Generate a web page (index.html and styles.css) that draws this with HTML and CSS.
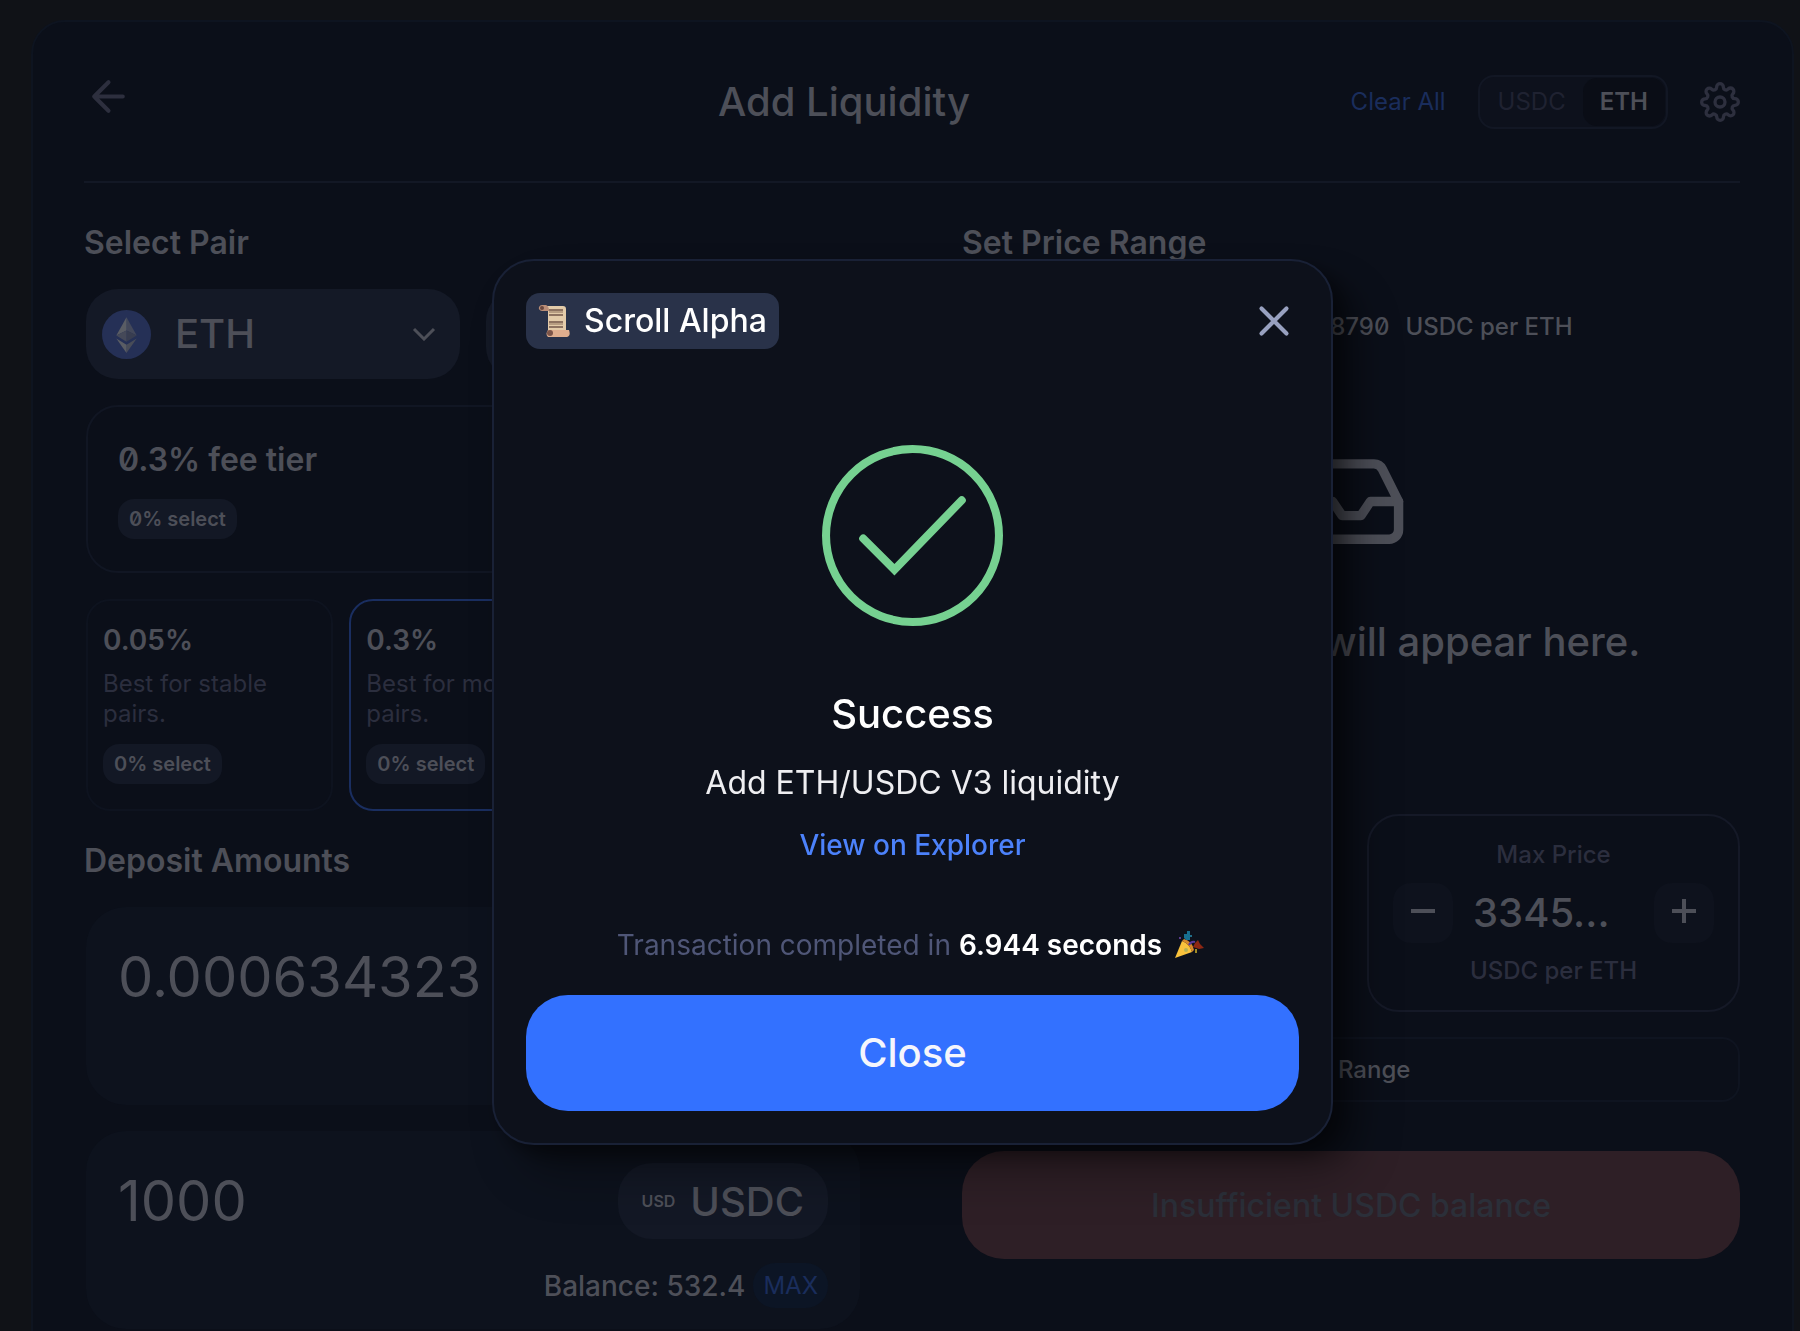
FILE: index.html
```html
<!DOCTYPE html>
<html lang="en">
<head>
  <meta charset="UTF-8">
  <meta name="viewport" content="width=device-width, initial-scale=1.0">
  <title>Add Liquidity</title>
  <link rel="stylesheet" href="styles.css">
</head>
<body>
  <main class="card">
    <header class="card-header">
      <a class="back" href="#" aria-label="Back">
        <svg class="back-icon" viewBox="0 0 24 24"><path d="M19 12H5M12 19l-7-7 7-7"/></svg>
      </a>
      <h1 class="title">Add Liquidity</h1>
      <div class="header-actions">
        <button class="clear-btn" type="button">Clear All</button>
        <div class="toggle">
          <button class="toggle-btn" type="button">USDC</button>
          <button class="toggle-btn active" type="button">ETH</button>
        </div>
        <button class="settings-btn" type="button" aria-label="Settings">
          <svg class="settings-icon" viewBox="0 0 24 24"><circle cx="12" cy="12" r="3"/><path d="M19.4 15a1.65 1.65 0 0 0 .33 1.82l.06.06a2 2 0 0 1 0 2.83 2 2 0 0 1-2.83 0l-.06-.06a1.65 1.65 0 0 0-1.82-.33 1.65 1.65 0 0 0-1 1.51V21a2 2 0 0 1-2 2 2 2 0 0 1-2-2v-.09A1.65 1.65 0 0 0 9 19.4a1.65 1.65 0 0 0-1.82.33l-.06.06a2 2 0 0 1-2.83 0 2 2 0 0 1 0-2.83l.06-.06a1.65 1.65 0 0 0 .33-1.82 1.65 1.65 0 0 0-1.51-1H3a2 2 0 0 1-2-2 2 2 0 0 1 2-2h.09A1.65 1.65 0 0 0 4.6 9a1.65 1.65 0 0 0-.33-1.82l-.06-.06a2 2 0 0 1 0-2.83 2 2 0 0 1 2.83 0l.06.06a1.65 1.65 0 0 0 1.82.33H9a1.65 1.65 0 0 0 1-1.51V3a2 2 0 0 1 2-2 2 2 0 0 1 2 2v.09a1.65 1.65 0 0 0 1 1.51 1.65 1.65 0 0 0 1.82-.33l.06-.06a2 2 0 0 1 2.83 0 2 2 0 0 1 0 2.83l-.06.06a1.65 1.65 0 0 0-.33 1.82V9a1.65 1.65 0 0 0 1.51 1H21a2 2 0 0 1 2 2 2 2 0 0 1-2 2h-.09a1.65 1.65 0 0 0-1.51 1z"/></svg>
        </button>
      </div>
    </header>

    <div class="columns">
      <!-- Pair, fee tier and deposit -->
      <section class="column left">
        <h2 class="heading">Select Pair</h2>
        <div class="pair">
          <button class="token-select" type="button">
            <svg class="token-icon" viewBox="0 0 48 48">
              <circle cx="24" cy="24" r="24" fill="#253056"/>
              <path d="M24 7v13L34 25z" fill="#43485a"/>
              <path d="M24 7L14 25l10-5z" fill="#5a5d64"/>
              <path d="M24 20v11l10-6z" fill="#383d50"/>
              <path d="M24 20L14 25l10 6z" fill="#454958"/>
              <path d="M24 34v8l10-14z" fill="#484c58"/>
              <path d="M24 34L14 28l10 14z" fill="#5a5d64"/>
            </svg>
            <span class="token-name">ETH</span>
            <svg class="chevron" viewBox="0 0 24 14"><path d="M2 2l10 10L22 2"/></svg>
          </button>
          <button class="token-select" type="button" aria-label="Second token"></button>
        </div>

        <div class="fee-card">
          <div class="fee-title">0.3% fee tier</div>
          <span class="badge slashed">0% select</span>
        </div>

        <div class="fee-options">
          <button class="fee-option" type="button">
            <span class="fee-value">0.05%</span>
            <span class="fee-text">Best for stable pairs.</span>
            <span class="badge">0% select</span>
          </button>
          <button class="fee-option selected" type="button">
            <span class="fee-value">0.3%</span>
            <span class="fee-text">Best for most pairs.</span>
            <span class="badge">0% select</span>
          </button>
        </div>

        <h2 class="heading deposit-heading">Deposit Amounts</h2>
        <div class="deposit">
          <div class="deposit-row">
            <input class="amount" type="text" value="0.000634323" aria-label="ETH amount">
          </div>
        </div>
        <div class="deposit">
          <div class="deposit-row">
            <input class="amount" type="text" value="1000" aria-label="USDC amount">
            <button class="currency" type="button"><span class="currency-logo">USD</span>USDC</button>
          </div>
          <div class="balance-row">
            <span class="balance">Balance: 532.4</span>
            <button class="max-btn" type="button">MAX</button>
          </div>
        </div>
      </section>

      <!-- Price range -->
      <section class="column right">
        <h2 class="heading">Set Price Range</h2>
        <p class="current-price">
          <span class="slashed">Current Price: 78.8790</span>
          <span>USDC per ETH</span>
        </p>
        <div class="chart-empty">
          <svg class="inbox-icon" viewBox="0 0 24 24"><path d="M22 12h-6l-2 3h-4l-2-3H2"/><path d="M5.45 5.11L2 12v6a2 2 0 0 0 2 2h16a2 2 0 0 0 2-2v-6l-3.45-6.89A2 2 0 0 0 16.76 4H7.24a2 2 0 0 0-1.79 1.11z"/></svg>
          <p class="empty-text">Your position will appear here.</p>
        </div>
        <div class="range">
          <div class="price-box">
            <label class="price-label" for="maxPrice">Max Price</label>
            <div class="price-row">
              <button class="step-btn" type="button" aria-label="Decrease">
                <svg class="step-icon" viewBox="0 0 24 24"><path d="M0 12h24"/></svg>
              </button>
              <input class="price-input" id="maxPrice" type="text" value="3345...">
              <button class="step-btn" type="button" aria-label="Increase">
                <svg class="step-icon" viewBox="0 0 24 24"><path d="M0 12h24M12 0v24"/></svg>
              </button>
            </div>
            <div class="price-label">USDC per ETH</div>
          </div>
        </div>
        <button class="full-range" type="button">Full Range</button>
        <button class="error-btn" type="button" disabled>Insufficient USDC balance</button>
      </section>
    </div>
  </main>

  <div class="overlay">
    <div class="modal" role="dialog" aria-modal="true" aria-labelledby="modalTitle">
      <div class="modal-top">
        <div class="network">
          <svg class="scroll-icon" viewBox="0 0 32 32">
            <path d="M5 1h20q3 0 3 3v23H10V6H5z" fill="#e3cba9"/>
            <path d="M4 0h4q3 1 3 6H4Q0 5 1 2q1-2 3-2z" fill="#b98d77"/>
            <circle cx="4" cy="3" r="2" fill="#69473f"/>
            <path d="M11 5h14M11 10h14M11 17h14M11 22h14" stroke="#8e7361" stroke-width="2"/>
            <path d="M11 7h14M11 19h14" stroke="#b79d82" stroke-width="2"/>
            <path d="M10 25h21q2 6-2 7H10q-3-3 0-7z" fill="#dfae8e"/>
            <circle cx="12" cy="28" r="3" fill="#7d5549"/>
          </svg>
          Scroll Alpha
        </div>
        <button class="x-btn" type="button" aria-label="Close dialog">
          <svg class="x-icon" viewBox="0 0 24 24"><path d="M18 6L6 18M6 6l12 12"/></svg>
        </button>
      </div>
      <svg class="check-icon" viewBox="0 0 180 180">
        <circle cx="90" cy="90" r="86"/>
        <path d="M41 93l31 31 67-69"/>
      </svg>
      <h2 class="modal-title" id="modalTitle">Success</h2>
      <p class="modal-text">Add ETH/USDC V3 liquidity</p>
      <a class="explorer" href="#">View on Explorer</a>
      <p class="duration">
        Transaction completed in <strong>6.944 seconds</strong>
        <svg class="party-icon" viewBox="0 0 30 30">
          <path d="M1 28L8 11q8 3 10 11z" fill="#f9c23c"/>
          <path d="M8 11q8 3 10 11l2-2Q18 11 10 9z" fill="#d9892b"/>
          <path d="M10 8V4h3V1h3v9h-4z" fill="#176f91"/>
          <path d="M15 15q2-4 6-3" fill="none" stroke="#5a3a99" stroke-width="2"/>
          <path d="M19 17l2-4 3-3 2 4 4 4-5 1z" fill="#8d2713"/>
          <path d="M22 19v4" stroke="#a08b26" stroke-width="2"/>
          <circle cx="6" cy="8" r="1" fill="#7448b8"/>
          <circle cx="17" cy="6" r="1" fill="#288cae"/>
          <circle cx="12" cy="20" r="2" fill="#b5b154"/>
        </svg>
      </p>
      <button class="close-btn" type="button">Close</button>
    </div>
  </div>
</body>
</html>
```
FILE: styles.css
```css
/* Global styles */
* {
  margin: 0;
  padding: 0;
  box-sizing: border-box;
}

body {
  height: 100vh;
  overflow: hidden;
  padding: 20px 6px 0 31px;
  background: #101217;
  color: #4d4f58;
  font-family: Inter, "Liberation Sans", sans-serif;
}

button, input {
  border: none;
  background: none;
  color: inherit;
  font-family: inherit;
}

button {
  cursor: pointer;
}

a {
  text-decoration: none;
}

svg {
  display: block;
  fill: none;
  flex-shrink: 0;
}

.card {
  background: #0b0f19;
  border: 2px solid #0e1420;
  border-radius: 34px;
  padding: 0 52px 60px 51px;
}

/* Header */
.card-header {
  display: grid;
  grid-template-columns: 1fr 4fr auto;
  align-items: center;
  height: 161px;
  border-bottom: 2px solid #131825;
}

.back {
  padding-bottom: 10px;
}

.back-icon {
  width: 49px;
  height: 49px;
  stroke: #2d2f3e;
  stroke-width: 2;
  stroke-linecap: round;
  stroke-linejoin: round;
}

.title {
  font-size: 40px;
  line-height: 48px;
  font-weight: 500;
  text-align: center;
}

.header-actions {
  display: flex;
  align-items: center;
  gap: 32px;
}

.clear-btn {
  color: #1a2d5c;
  font-size: 24px;
  line-height: 30px;
}

.toggle {
  display: flex;
  border: 2px solid #121724;
  border-radius: 16px;
  background: #0d111c;
  padding: 1px;
}

.toggle-btn {
  padding: 9px 17px;
  border-radius: 14px;
  color: #1f2231;
  font-size: 24px;
  line-height: 30px;
}

.toggle-btn.active {
  background: #0a0d16;
  color: #4d4f58;
  font-weight: 600;
}

.settings-icon {
  width: 40px;
  height: 40px;
  stroke: #2d2f3e;
  stroke-width: 2;
}

/* Columns */
.columns {
  display: grid;
  grid-template-columns: repeat(2, minmax(0, 1fr));
  gap: 100px;
  padding-top: 40px;
}

.column {
  display: flex;
  flex-direction: column;
}

.left {
  gap: 26px;
}

.heading {
  font-size: 32px;
  line-height: 40px;
  font-weight: 600;
}

.deposit-heading {
  margin-top: 4px;
}

.pair, .fee-card, .fee-options, .deposit {
  margin: 0 2px;
}

.pair {
  display: grid;
  grid-template-columns: repeat(2, minmax(0, 1fr));
  gap: 26px;
}

.token-select {
  display: flex;
  align-items: center;
  height: 90px;
  padding: 0 24px 0 16px;
  border-radius: 32px;
  background: #141926;
}

.token-icon {
  width: 49px;
  height: 49px;
}

.token-name {
  flex: 1;
  margin-left: 24px;
  font-size: 40px;
  line-height: 48px;
  font-weight: 500;
  text-align: left;
}

.chevron {
  width: 24px;
  height: 14px;
  stroke: #4d4f58;
  stroke-width: 3;
}

.fee-card {
  border: 2px solid #111623;
  border-radius: 32px;
  padding: 33px 30px 32px;
}

.fee-title {
  margin-bottom: 19px;
  font-size: 32px;
  line-height: 40px;
  font-weight: 600;
}

.fee-title, .slashed {
  font-variant-numeric: slashed-zero;
}

.badge {
  display: block;
  width: fit-content;
  padding: 6px 11px;
  border-radius: 16px;
  background: #131825;
  font-size: 20px;
  line-height: 28px;
  font-weight: 600;
}

.fee-options {
  display: grid;
  grid-template-columns: repeat(3, minmax(0, 1fr));
  gap: 16px;
}

.fee-option {
  display: flex;
  flex-direction: column;
  align-items: flex-start;
  padding: 22px 15px 25px;
  border: 2px solid #0e131f;
  border-radius: 24px;
  text-align: left;
}

.fee-option.selected {
  border-color: #1a2e60;
}

.fee-value {
  font-size: 28px;
  line-height: 34px;
  font-weight: 600;
}

.fee-text {
  margin: 12px 0 15px;
  color: #2b2e3e;
  font-size: 24px;
  line-height: 30px;
}

/* Deposit */
.deposit {
  min-height: 198px;
  padding: 32px 32px 21px;
  border-radius: 40px;
  background: #0d121d;
}

.deposit-row {
  display: flex;
  align-items: center;
  min-height: 76px;
}

.amount {
  flex: 1;
  min-width: 0;
  height: 68px;
  font-size: 56px;
  line-height: 68px;
}

.currency {
  display: flex;
  align-items: center;
  gap: 15px;
  height: 76px;
  padding: 0 24px;
  border-radius: 34px;
  background: #131825;
  font-size: 40px;
  font-weight: 500;
}

.currency-logo {
  font-size: 16px;
  font-weight: 600;
}

.balance-row {
  display: flex;
  justify-content: flex-end;
  align-items: center;
  gap: 8px;
  margin-top: 24px;
}

.balance {
  font-size: 28px;
  line-height: 34px;
  font-weight: 500;
}

.max-btn {
  height: 45px;
  padding: 0 10px;
  border-radius: 22px;
  background: #0c1525;
  color: #1a2d5c;
  font-size: 24px;
}

/* Price range */
.current-price {
  display: flex;
  justify-content: center;
  gap: 16px;
  margin-top: 49px;
  font-size: 24px;
  line-height: 30px;
  font-weight: 500;
}

.chart-empty {
  display: flex;
  flex-direction: column;
  align-items: center;
  gap: 60px;
  padding: 103px 0 148px;
}

.inbox-icon {
  width: 113px;
  height: 113px;
  stroke: #4d4f58;
  stroke-width: 2;
  stroke-linecap: round;
  stroke-linejoin: round;
}

.empty-text {
  font-size: 40px;
  line-height: 48px;
  font-weight: 500;
}

.range {
  display: grid;
  grid-template-columns: repeat(2, minmax(0, 1fr));
  gap: 32px;
}

.price-box {
  grid-column: 2;
  display: flex;
  flex-direction: column;
  gap: 13px;
  padding: 24px;
  border: 2px solid #151927;
  border-radius: 32px;
  text-align: center;
}

.price-label {
  color: #2b2e3e;
  font-size: 24px;
  line-height: 30px;
  font-weight: 500;
}

.price-row {
  display: flex;
  align-items: center;
}

.step-btn {
  display: flex;
  justify-content: center;
  height: 60px;
  width: 60px;
  padding-top: 16px;
  border-radius: 18px;
  background: #0e121d;
}

.step-icon {
  width: 24px;
  height: 24px;
  stroke: #4d4f58;
  stroke-width: 4;
}

.price-input {
  flex: 1;
  min-width: 0;
  margin: 0 20px;
  font-size: 40px;
  line-height: 48px;
  font-weight: 500;
}

.full-range {
  height: 65px;
  margin-top: 25px;
  border: 2px solid #0f1420;
  border-radius: 18px;
  font-size: 24px;
  font-weight: 500;
}

.error-btn {
  height: 108px;
  margin-top: 49px;
  border-radius: 42px;
  background: #2e1f26;
  color: #2b2f39;
  font-size: 32px;
  font-weight: 500;
}

/* Modal */
.overlay {
  position: fixed;
  inset: 0;
  display: flex;
  align-items: center;
  justify-content: center;
  padding: 72px 0 0 25px;
}

.modal {
  display: flex;
  flex-direction: column;
  align-items: center;
  width: 841px;
  max-width: 100%;
  padding: 32px;
  border: 2px solid #192136;
  border-radius: 42px;
  background: #0d111b;
  color: #ffffff;
  box-shadow: 24px 32px 48px rgba(0, 0, 0, 0.24), 24px 16px 24px rgba(0, 0, 0, 0.24), 8px 8px 16px rgba(0, 0, 0, 0.32);
}

.modal-top {
  display: flex;
  justify-content: space-between;
  align-items: center;
  width: 100%;
  margin-bottom: 96px;
}

.network {
  display: flex;
  align-items: center;
  gap: 14px;
  padding: 8px 12px;
  border-radius: 14px;
  background: #293249;
  font-size: 32px;
  line-height: 40px;
  font-weight: 500;
}

.scroll-icon {
  width: 32px;
  height: 32px;
}

.x-icon {
  width: 50px;
  height: 50px;
  stroke: #98a1c0;
  stroke-width: 2;
  stroke-linecap: round;
}

.check-icon {
  width: 181px;
  height: 181px;
  stroke: #76d191;
  stroke-width: 8;
  stroke-linecap: round;
}

.modal-title {
  margin: 64px 0 25px;
  font-size: 40px;
  line-height: 48px;
  font-weight: 500;
}

.modal-text {
  margin-bottom: 25px;
  color: #eeeef1;
  font-size: 32px;
  line-height: 40px;
}

.explorer {
  margin-bottom: 66px;
  color: #4c82fb;
  font-size: 28px;
  line-height: 34px;
  font-weight: 500;
}

.duration {
  display: flex;
  align-items: center;
  gap: 8px;
  margin-bottom: 33px;
  color: #4f5677;
  font-size: 28px;
  line-height: 34px;
}

.duration strong {
  color: #ffffff;
  font-weight: 600;
}

.party-icon {
  width: 30px;
  height: 30px;
  margin: 0 4px;
}

.close-btn {
  width: 100%;
  height: 116px;
  border-radius: 42px;
  background: #3371ff;
  color: #f5f6fc;
  font-size: 40px;
  font-weight: 500;
}
```
